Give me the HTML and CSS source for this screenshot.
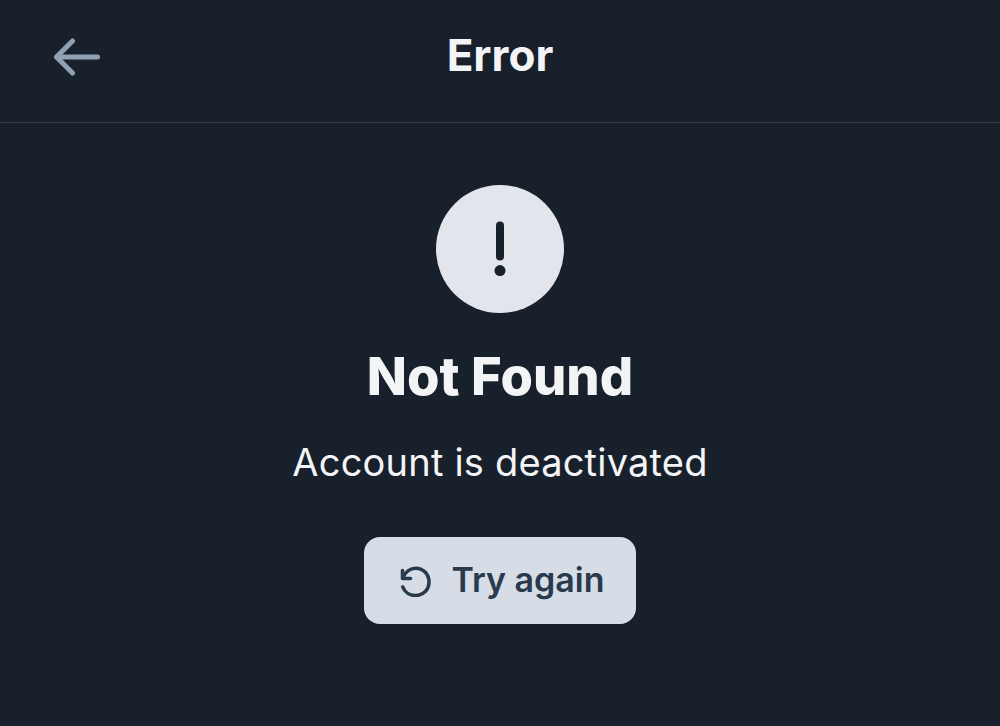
FILE: index.html
```html
<!DOCTYPE html>
<html>
<head>
  <title>Error</title>
  <link rel="stylesheet" href="styles.css">
</head>
<body>
  <div class="header">
    <div class="back-button">
      <svg width="48" height="40" viewBox="0 0 48 40" fill="none" stroke="#8fa1b5" stroke-width="5" stroke-linecap="round" stroke-linejoin="round">
        <path d="M45.5 21H5"/>
        <path d="M20.5 5L4.5 21L20.5 37"/>
      </svg>
    </div>
    <h1>Error</h1>
  </div>

  <div class="content">
    <div class="alert-circle">
      <svg width="14" height="56" viewBox="0 0 14 56" fill="none">
        <path d="M7 4.6V35.4" stroke="#18202b" stroke-width="8" stroke-linecap="round"/>
        <circle cx="7" cy="49.6" r="5.5" fill="#18202b"/>
      </svg>
    </div>
    <h2>Not Found</h2>
    <p>Account is deactivated</p>
    <div class="retry-button">
      <svg width="32" height="32" viewBox="0 0 32 32" fill="none" stroke="#2a3a4d" stroke-width="3.6" stroke-linecap="round" stroke-linejoin="round">
        <path d="M3.5 5.5V13.5H11.5"/>
        <path d="M4 13C6 7 11 3.2 17 3.2C24.5 3.2 30 9.5 30 17C30 24.5 24.5 30.5 16.5 30.5C10.5 30.5 5.5 27 3.8 22"/>
      </svg>
      <span>Try again</span>
    </div>
  </div>
</body>
</html>
```

FILE: styles.css
```css
body {
  margin: 0;
  height: 726px;
  overflow: hidden;
  background: #18202b;
  font-family: Inter, 'Noto Sans', sans-serif;
}

.header {
  display: flex;
  align-items: center;
  justify-content: center;
  height: 122px;
  border-bottom: 1px solid #333c47;
  position: relative;
}

.header h1 {
  margin: 0 0 12px 0;
  font-size: 44px;
  font-weight: 700;
  color: #f3f4f6;
}

.back-button {
  position: absolute;
  left: 52px;
  top: 36px;
  line-height: 0;
}

.content {
  display: flex;
  flex-direction: column;
  align-items: center;
  padding-top: 62px;
}

.alert-circle {
  display: flex;
  align-items: center;
  justify-content: center;
  width: 128px;
  height: 128px;
  border-radius: 50%;
  background: #e2e6ec;
}

.content h2 {
  margin: 31px 0 0 0;
  font-size: 52.5px;
  line-height: 64px;
  font-weight: 800;
  color: #f3f4f6;
}

.content p {
  margin: 29px 0 0 0;
  font-size: 38px;
  line-height: 50px;
  letter-spacing: 0.2px;
  color: #f3f4f6;
}

.retry-button {
  display: flex;
  align-items: center;
  justify-content: center;
  gap: 20px;
  box-sizing: border-box;
  width: 272px;
  height: 87px;
  margin-top: 50px;
  padding-left: 4px;
  border-radius: 16px;
  background: #d6dde6;
}

.retry-button span {
  margin-bottom: 2px;
  font-size: 34px;
  font-weight: 600;
  color: #2a3a4d;
}
```
